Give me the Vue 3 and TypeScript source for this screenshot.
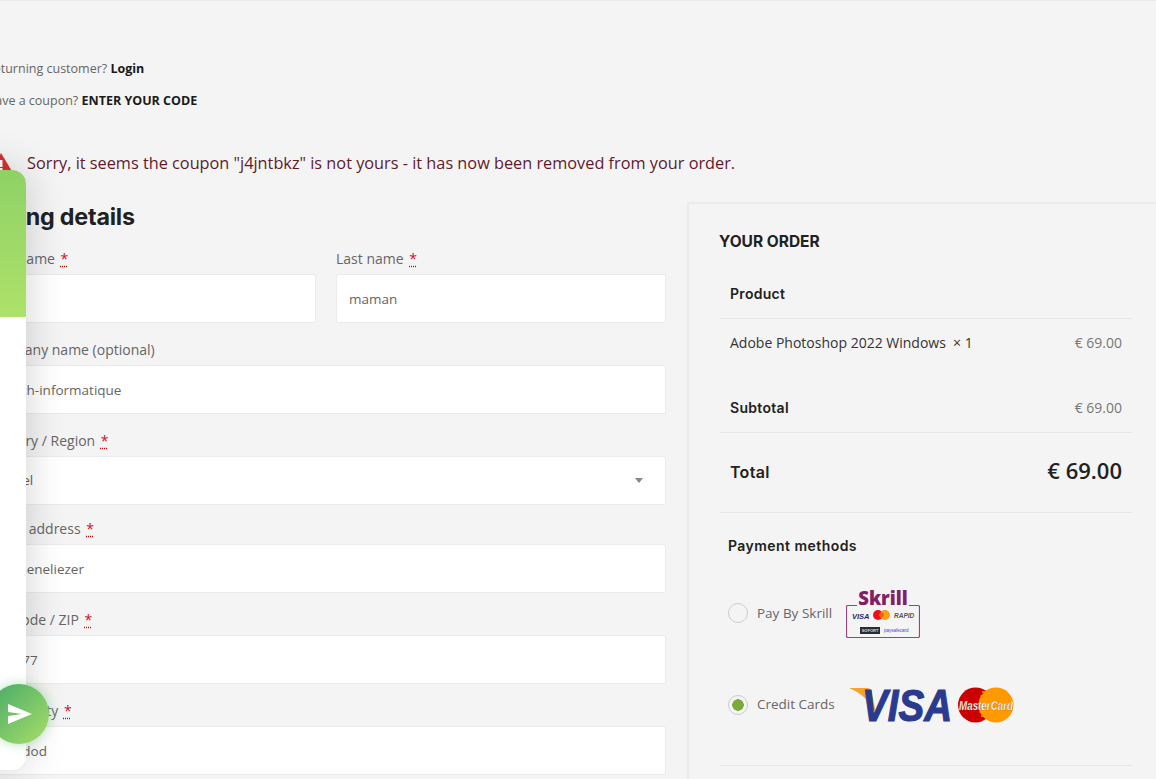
<script setup lang="ts">
interface Field {
  label: string
  value: string
  required: boolean
}

const nameFields: Field[] = [
  { label: 'First name', value: '', required: true },
  { label: 'Last name', value: 'maman', required: true },
]

const companyField: Field = { label: 'Company name (optional)', value: 'Btech-informatique', required: false }

const addressFields: Field[] = [
  { label: 'Street address', value: '10 Beneliezer', required: true },
  { label: 'Postcode / ZIP', value: '12377', required: true },
  { label: 'Town / City', value: 'Ashdod', required: true },
]
</script>

<template>
  <div class="page">
    <div class="content">
      <p class="notice notice-first">Returning customer? <a>Login</a></p>
      <p class="notice">Have a coupon? <a>ENTER YOUR CODE</a></p>

      <div class="alert">
        <svg class="alert-icon" viewBox="0 0 24 20" width="24" height="20">
          <path d="M12 0 L24 20 H0 Z" fill="#d8322e" />
          <rect x="10.5" y="7" width="3" height="7" fill="#fff" />
          <rect x="10.5" y="15" width="3" height="2.5" fill="#fff" />
        </svg>
        <span>Sorry, it seems the coupon "j4jntbkz" is not yours - it has now been removed from your order.</span>
      </div>

      <div class="columns">
        <form class="billing">
          <h3>Billing details</h3>

          <div class="name-row">
            <div v-for="f in nameFields" :key="f.label" class="field">
              <label>{{ f.label }} <abbr>*</abbr></label>
              <div class="input">{{ f.value }}</div>
            </div>
          </div>

          <div class="field">
            <label>{{ companyField.label }}</label>
            <div class="input">{{ companyField.value }}</div>
          </div>

          <div class="field field-select">
            <label>Country / Region <abbr>*</abbr></label>
            <div class="input select">
              <span>Israel</span>
              <i class="caret"></i>
            </div>
          </div>

          <div v-for="f in addressFields" :key="f.label" class="field">
            <label>{{ f.label }} <abbr>*</abbr></label>
            <div class="input">{{ f.value }}</div>
          </div>
        </form>

        <aside class="order">
          <h4>YOUR ORDER</h4>
          <div class="table">
            <div class="row row-head"><strong>Product</strong></div>
            <div class="row row-item">
              <span class="item-name">Adobe Photoshop 2022 Windows &nbsp;× 1</span>
              <span class="price">€ 69.00</span>
            </div>
            <div class="row row-sub">
              <strong>Subtotal</strong>
              <span class="price">€ 69.00</span>
            </div>
            <div class="row row-total">
              <strong>Total</strong>
              <span class="total-price">€ 69.00</span>
            </div>
          </div>

          <div class="payment">
            <h5>Payment methods</h5>
            <div class="method method-skrill">
              <span class="radio"></span>
              <span class="method-name">Pay By Skrill</span>
              <svg class="skrill-logo" viewBox="0 0 74 50" width="74" height="50">
                <text x="37" y="17" text-anchor="middle" class="skrill-word">Skrill</text>
                <path d="M11 17.500 H2 a1.500 1.500 0 0 0 -1.500 1.500 V48 a1.500 1.500 0 0 0 1.500 1.500 H72 a1.500 1.500 0 0 0 1.500 -1.500 V19 a1.500 1.500 0 0 0 -1.500 -1.500 H63" fill="none" stroke="#93457f" stroke-width="1.200" />
                <text x="6" y="31" class="skrill-visa">VISA</text>
                <circle cx="32" cy="27" r="5" fill="#e8121e" />
                <circle cx="39" cy="27" r="5" fill="#f79e1b" />
                <circle cx="35.500" cy="27" r="2.400" fill="#f2600f" />
                <text x="48" y="30" class="skrill-rapid">RAPID</text>
                <rect x="14" y="39" width="20" height="7" fill="#2c2c30" />
                <text x="24" y="44.300" text-anchor="middle" class="skrill-sofort">SOFORT</text>
                <text x="38" y="44.300" class="skrill-pay">paysafecard</text>
              </svg>
            </div>
            <div class="method method-card">
              <span class="radio radio-on"></span>
              <span class="method-name">Credit Cards</span>
              <svg class="cards-logo" viewBox="0 0 165 36" width="165" height="36">
                <path d="M0 1 H18 Q22 1 23 6 L27 27 Q18 8 0 1 Z" fill="#f4a529" />
                <text x="13" y="33.500" class="visa-word" textLength="90" lengthAdjust="spacingAndGlyphs">VISA</text>
                <circle cx="126.500" cy="18" r="17.500" fill="#cc0000" />
                <circle cx="147" cy="18" r="17.500" fill="#ff9900" />
                <path d="M133 5 h8 M131.500 9 h11 M130.500 13 h13 M130.500 25 h13 M132 29 h10" stroke="#ff9900" stroke-width="1.600" />
                <text x="137" y="22.500" text-anchor="middle" class="mc-word" textLength="54" lengthAdjust="spacingAndGlyphs">MasterCard</text>
              </svg>
            </div>
          </div>
        </aside>
      </div>
    </div>

    <div class="chat-panel">
      <div class="chat-head"></div>
    </div>
    <button class="chat-send" type="button" aria-label="Send">
      <svg viewBox="0 0 24 20" width="24" height="20">
        <path d="M0 0 L24 10 L0 20 V12 L14 10 L0 8 Z" fill="#fff" />
      </svg>
    </button>
  </div>
</template>

<style>
html,
body {
  margin: 0;
  background: #f4f4f4;
}
</style>

<style scoped>
.page {
  position: relative;
  width: 1156px;
  height: 779px;
  overflow: hidden;
  background: #f4f4f4;
  border-top: 1px solid #ebebeb;
  box-sizing: border-box;
  font-family: "Open Sans", "Noto Sans", sans-serif;
  font-size: 14px;
  color: #666;
}

.content {
  margin-left: -14px;
  padding-top: 58px;
  width: 1250px;
}

.notice {
  margin: 0 0 12px;
  height: 20px;
  line-height: 20px;
  font-size: 12.500px;
  color: #666;
}

.notice a {
  font-weight: 700;
  color: #1a1a1a;
}

.alert {
  display: flex;
  align-items: center;
  gap: 14px;
  margin: 40px 0 0 3px;
  height: 24px;
  font-size: 16.300px;
  color: #5f1a2c;
}

.alert-icon {
  flex: none;
}

.columns {
  display: grid;
  grid-template-columns: 680px 560px;
  column-gap: 21px;
  margin-top: 27px;
}

.billing h3 {
  margin: 0 0 15px;
  height: 29px;
  line-height: 29px;
  font-family: Inter, "Noto Sans", sans-serif;
  font-size: 23.300px;
  font-weight: 700;
  letter-spacing: -0.200px;
  color: #212121;
}

.name-row {
  display: grid;
  grid-template-columns: 330px 330px;
  column-gap: 20px;
}

.field {
  margin-bottom: 14px;
}

.field-select {
  margin-bottom: 11px;
}

.field label {
  display: block;
  height: 24px;
  line-height: 26px;
  margin-bottom: 4px;
  color: #666;
}

.field abbr {
  margin-left: 2px;
  color: #c8102e;
  text-decoration: underline dotted #c00;
  text-underline-offset: 2px;
}

.input {
  box-sizing: border-box;
  height: 49px;
  line-height: 49px;
  padding: 0 12px;
  background: #fff;
  border: 1px solid #ebebeb;
  border-radius: 2px;
  font-size: 13.500px;
  color: #666;
}

.select {
  display: flex;
  justify-content: space-between;
  align-items: center;
  padding-right: 22px;
}

.caret {
  width: 0;
  height: 0;
  border-left: 4px solid transparent;
  border-right: 4px solid transparent;
  border-top: 5px solid #888;
}

.order {
  box-sizing: border-box;
  height: 640px;
  padding: 26px 0 0 31px;
  border-left: 2px solid #ebebeb;
  border-top: 2px solid #ebebeb;
}

.order h4 {
  margin: 0 0 16px -1px;
  height: 24px;
  line-height: 24px;
  font-family: Inter, "Noto Sans", sans-serif;
  font-size: 15.500px;
  font-weight: 700;
  color: #212121;
}

.table {
  width: 412px;
}

.row {
  display: flex;
  justify-content: space-between;
  box-sizing: border-box;
  padding: 0 10px;
}

.row strong {
  font-family: Inter, "Noto Sans", sans-serif;
  font-size: 14px;
  font-weight: 600;
  letter-spacing: 0.300px;
  color: #212121;
}

.row-head {
  height: 49px;
  padding-bottom: 2px;
  align-items: center;
  border-bottom: 1px solid #e6e6e6;
}

.row-item {
  height: 65px;
  padding-top: 14px;
  line-height: 20px;
}

.item-name {
  color: #333;
}

.price {
  color: #777;
}

.row-sub {
  height: 49px;
  padding-bottom: 2px;
  align-items: center;
  border-bottom: 1px solid #e6e6e6;
}

.row-total {
  height: 80px;
  padding-bottom: 4px;
  align-items: center;
  border-bottom: 1px solid #e6e6e6;
}

.row-total strong {
  margin-top: 2px;
  font-size: 16px;
}

.total-price {
  margin-bottom: 2px;
  font-size: 22px;
  font-weight: 600;
  color: #212121;
}

.payment {
  width: 412px;
  height: 253px;
  box-sizing: border-box;
  padding: 23px 0 0 8px;
  border-bottom: 1px solid #e6e6e6;
}

.payment h5 {
  margin: 0;
  height: 20px;
  line-height: 20px;
  font-family: Inter, "Noto Sans", sans-serif;
  font-size: 14px;
  font-weight: 600;
  letter-spacing: 0.450px;
  color: #212121;
}

.method {
  display: flex;
  align-items: center;
  font-size: 13.500px;
  color: #666;
}

.method-skrill {
  height: 50px;
  margin-top: 32px;
}

.method-card {
  height: 36px;
  margin-top: 49px;
}

.method-card .method-name {
  margin-top: -3px;
}

.radio {
  flex: none;
  box-sizing: border-box;
  width: 20px;
  height: 20px;
  margin-right: 9px;
  border: 1px solid #ccc;
  border-radius: 50%;
  background: #f4f4f4;
}

.radio-on {
  background: radial-gradient(circle, #7aa93c 0 5.500px, #f4f4f4 6px);
}

.skrill-logo,
.cards-logo {
  margin-left: 14px;
}

.skrill-word {
  font-family: "Open Sans", sans-serif;
  font-size: 18.500px;
  font-weight: 800;
  fill: #832065;
}

.skrill-visa {
  font-family: "Liberation Sans", sans-serif;
  font-size: 7.500px;
  font-style: italic;
  font-weight: 700;
  fill: #1f2a6b;
}

.skrill-rapid {
  font-family: "Liberation Sans", sans-serif;
  font-size: 6.500px;
  font-style: italic;
  font-weight: 700;
  fill: #555;
}

.skrill-sofort {
  font-family: "Liberation Sans", sans-serif;
  font-size: 4px;
  font-weight: 700;
  fill: #ddd;
}

.skrill-pay {
  font-family: "Liberation Sans", sans-serif;
  font-size: 4.500px;
  fill: #4a3bd6;
}

.visa-word {
  font-family: "Liberation Sans", sans-serif;
  font-size: 45px;
  font-style: italic;
  font-weight: 700;
  fill: #2a3a8f;
  stroke: #2a3a8f;
  stroke-width: 1.200px;
}

.mc-word {
  font-family: "Liberation Sans", sans-serif;
  font-size: 12px;
  font-style: italic;
  font-weight: 700;
  fill: #fff;
  stroke: #7a4a30;
  stroke-width: 0.250px;
}

.chat-panel {
  position: absolute;
  left: -60px;
  top: 169px;
  width: 86px;
  height: 600px;
  overflow: hidden;
  background: #fff;
  border-radius: 0 14px 14px 0;
  box-shadow: 0 0 40px rgba(0, 0, 0, 0.18);
}

.chat-head {
  height: 147px;
  background: linear-gradient(180deg, #8fd166, #ade26a);
}

.chat-send {
  position: absolute;
  left: -11px;
  top: 683px;
  display: flex;
  align-items: center;
  justify-content: center;
  width: 60px;
  height: 60px;
  padding: 0 0 0 1px;
  border: 0;
  border-radius: 50%;
  background: linear-gradient(135deg, #45aa68, #a9de68);
  box-shadow: 0 0 12px rgba(90, 190, 110, 0.45);
}
</style>
